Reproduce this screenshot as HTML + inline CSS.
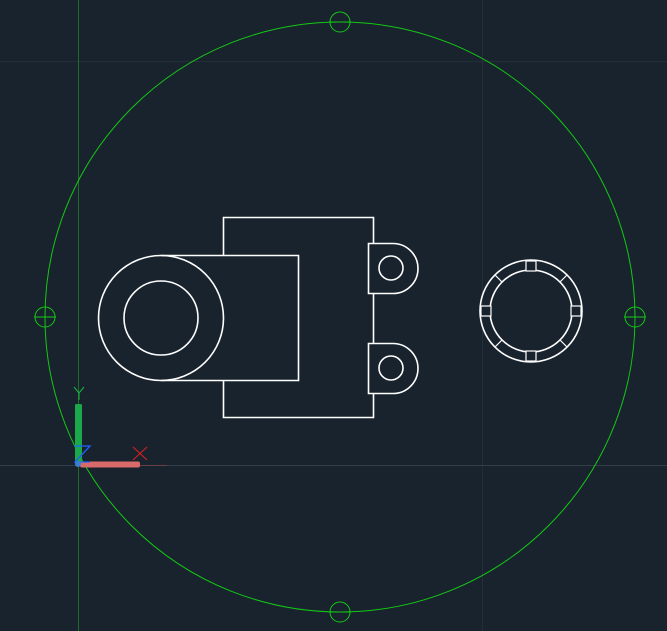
<!DOCTYPE html>
<html><head><meta charset="utf-8"><style>
html,body{margin:0;padding:0;background:#19232e;overflow:hidden}
svg{display:block}
</style></head><body>
<svg width="667" height="631" viewBox="0 0 667 631" xmlns="http://www.w3.org/2000/svg">
<rect width="667" height="631" fill="#19232e"/>
<g stroke="#232e39" stroke-width="1">
<line x1="0" y1="61.5" x2="667" y2="61.5"/>
<line x1="482.5" y1="0" x2="482.5" y2="631"/>
</g>
<line x1="0" y1="465.5" x2="667" y2="465.5" stroke="#343e48" stroke-width="1"/>
<line x1="78.5" y1="0" x2="78.5" y2="631" stroke="#1f6b2a" stroke-width="1"/>
<g stroke="#14c814" stroke-width="1" fill="none">
<circle cx="340" cy="317" r="295"/>
<circle cx="340" cy="22" r="10"/><line x1="329" y1="22" x2="351" y2="22"/>
<circle cx="340" cy="612" r="10"/><line x1="329" y1="612" x2="351" y2="612"/>
<circle cx="45" cy="317" r="10"/><line x1="34" y1="317" x2="56" y2="317"/>
<circle cx="635" cy="317" r="10"/><line x1="624" y1="317" x2="646" y2="317"/>
</g>
<g stroke="#ffffff" stroke-width="1.6" fill="none">
<circle cx="161" cy="318" r="62.5"/>
<circle cx="161" cy="318" r="37"/>
<polyline points="161,255.5 298.5,255.5 298.5,380.5 161,380.5"/>
<polyline points="223.5,255.5 223.5,217.5 373.5,217.5 373.5,243.5"/>
<polyline points="223.5,380.5 223.5,417.5 373.5,417.5 373.5,393.5"/>
<line x1="373.5" y1="293.5" x2="373.5" y2="343.5"/>
<path d="M368.5 243.5 V293.5 H393 A25 25 0 0 0 393 243.5 Z"/>
<circle cx="391" cy="268" r="12"/>
<path d="M368.5 343.5 V393.5 H393 A25 25 0 0 0 393 343.5 Z"/>
<circle cx="391" cy="368" r="12"/>
<circle cx="531" cy="311" r="51"/>
<circle cx="531" cy="311" r="41"/>
</g>
<g stroke="#ffffff" stroke-width="1.2" fill="#19232e">
<rect x="526" y="261" width="10" height="10"/>
<rect x="526" y="351" width="10" height="10"/>
<rect x="481" y="306" width="10" height="10"/>
<rect x="571" y="306" width="10" height="10"/>
<line x1="495" y1="275" x2="502" y2="282"/>
<line x1="567" y1="275" x2="560" y2="282"/>
<line x1="495" y1="347" x2="502" y2="340"/>
<line x1="567" y1="347" x2="560" y2="340"/>
</g>
<rect x="75" y="404" width="7" height="60" rx="1.5" fill="#1aa84a"/>
<rect x="80" y="461.5" width="60" height="6" rx="2" fill="#d86a6a"/>
<g stroke="#2060ff" stroke-width="1.3" fill="none">
<polyline points="74,446 90,446 75,462 90,462"/>
</g>
<circle cx="78" cy="464" r="3" fill="#3a7fd0"/>
<g stroke="#18b840" stroke-width="1" fill="none"><polyline points="74,387 79,393 84,387"/><line x1="79" y1="393" x2="79" y2="400"/></g>
<g stroke="#e02020" stroke-width="1"><line x1="133" y1="447" x2="147" y2="460"/><line x1="147" y1="447" x2="133" y2="460"/></g>
<line x1="140" y1="465.5" x2="167" y2="465.5" stroke="#6a4048" stroke-width="1"/>
</svg>
</body></html>
